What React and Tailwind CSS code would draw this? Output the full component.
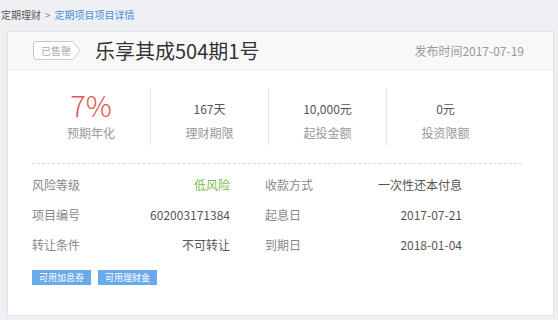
const stats = [
  { value: "7%", label: "预期年化", big: true },
  { value: "167天", label: "理财期限" },
  { value: "10,000元", label: "起投金额" },
  { value: "0元", label: "投资限额" },
];

const rows = [
  ["风险等级", "低风险", "收款方式", "一次性还本付息"],
  ["项目编号", "602003171384", "起息日", "2017-07-21"],
  ["转让条件", "不可转让", "到期日", "2018-01-04"],
];

export default function App() {
  return (
    <div
      className="w-[558px] h-[320px] bg-[#eef0f3] overflow-hidden"
      style={{ fontFamily: '"Noto Sans CJK SC", "Noto Sans", sans-serif' }}
    >
      <div className="h-[31px] flex items-center text-[10px] pl-[1px] pb-[3px]">
        <span className="text-[#555]">定期理财</span>
        <span className="text-[#888] mx-[4px]">&gt;</span>
        <span className="text-[#4a90d9]">定期项目项目详情</span>
      </div>

      <div className="ml-[7px] w-[547px] h-[285px] bg-white border border-[#e3e3e3]">
        <div className="h-[38px] bg-[#f8f8f8] border-b border-[#ececec] flex items-center pl-[25px] pr-[29px]">
          <div className="relative h-[19px] w-[48px] flex items-center">
            <svg className="absolute inset-0" width="48" height="19" viewBox="0 0 48 19">
              <path d="M3 0.5 H40 L47 9.5 L40 18.5 H3 Q0.5 18.5 0.5 16 V3 Q0.5 0.5 3 0.5 Z" fill="#fff" stroke="#c9c9c9" />
            </svg>
            <span className="relative pl-[8px] text-[10px] text-[#aaa]">已售罄</span>
          </div>
          <span className="ml-[14px] text-[20px] text-[#333] leading-none">乐享其成504期1号</span>
          <span className="ml-auto text-[12px] text-[#999]">发布时间2017-07-19</span>
        </div>

        <div className="px-[24px]">
          <div className="grid grid-cols-4 w-[472px] mt-[18px] h-[57px]">
            {stats.map((s, i) => (
              <div
                key={s.label}
                className={`flex flex-col items-center ${i > 0 ? "border-l border-[#e6e6e6]" : ""}`}
              >
                <div className="h-[33px] flex items-center">
                  {s.big ? (
                    <span className="text-[29px] leading-none text-[#e05a55] font-light">{s.value}</span>
                  ) : (
                    <span className="text-[12px] text-[#555] mt-[8px]">{s.value}</span>
                  )}
                </div>
                <span className="text-[12px] leading-[16px] text-[#999] mt-[4px]">{s.label}</span>
              </div>
            ))}
          </div>

          <div className="mt-[18px] w-[490px] border-t border-dashed border-[#d8d8d8]" />

          <div className="mt-[12px] flex flex-col gap-[12px] text-[12px] whitespace-nowrap">
            {rows.map((r) => (
              <div key={r[0]} className="flex items-center h-[18px]">
                <span className="w-[50px] text-[#888]">{r[0]}</span>
                <span className={`w-[148px] text-right ${r[1] === "低风险" ? "text-[#7dbb4f]" : "text-[#555]"}`}>
                  {r[1]}
                </span>
                <span className="ml-[35px] w-[60px] text-[#888]">{r[2]}</span>
                <span className="w-[137px] text-right text-[#555]">{r[3]}</span>
              </div>
            ))}
          </div>

          <div className="mt-[16px] flex gap-[7px]">
            <span className="h-[15px] px-[7px] flex items-center bg-[#6aaaea] text-white text-[9px]">可用加息券</span>
            <span className="h-[15px] px-[7px] flex items-center bg-[#6aaaea] text-white text-[9px]">可用理财金</span>
          </div>
        </div>
      </div>
    </div>
  );
}
